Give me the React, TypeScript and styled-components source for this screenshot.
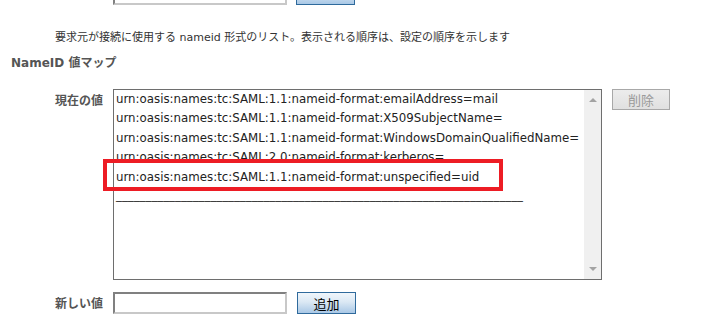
import { createGlobalStyle, styled } from 'styled-components';

const GlobalStyle = createGlobalStyle`
  body {
    margin: 0;
    background: #fff;
    font-family: "DejaVu Sans", "Noto Sans CJK JP", sans-serif;
  }
`;

// 設定ページ全体
const Page = styled.div`
  display: flex;
  flex-direction: column;
  width: 727px;
  height: 325px;
  overflow: hidden;
`;

// 上で切れている入力行
const TopRow = styled.div`
  display: flex;
  gap: 9px;
  margin-top: -17px;
  padding-left: 113px;
`;

const TextInput = styled.input`
  box-sizing: border-box;
  width: 174px;
  height: 22px;
  border: 2px solid;
  border-color: #808080 #c8c8c8 #c8c8c8 #808080;
  background: #fff;
`;

const Button = styled.button<{ $disabled?: boolean }>`
  box-sizing: border-box;
  width: ${(p) => (p.$disabled ? '58px' : '59px')};
  height: ${(p) => (p.$disabled ? '21px' : '22px')};
  padding: 0;
  border: 1px solid ${(p) => (p.$disabled ? '#a8a8a8' : '#2f6a9c')};
  background: ${(p) =>
    p.$disabled
      ? 'linear-gradient(#ececec, #e0e0e0)'
      : 'linear-gradient(#f0f6fb, #dbe8f4 45%, #a9c8e6)'};
  color: ${(p) => (p.$disabled ? '#9a9a9a' : '#000')};
  font-family: "Noto Sans CJK JP", sans-serif;
  font-size: 13px;
  line-height: 1;
`;

const Description = styled.div`
  margin-top: 25px;
  padding-left: 55px;
  color: #333;
  font-size: 11px;
  line-height: 16px;
`;

const Heading = styled.div`
  margin-top: 9px;
  padding-left: 11px;
  color: #555;
  font-weight: bold;
  font-size: 12px;
  line-height: 16px;
`;

// ラベル + 入力欄の行
const FieldRow = styled.div<{ $top: number }>`
  display: flex;
  align-items: flex-start;
  gap: 10px;
  margin-top: ${(p) => p.$top}px;
`;

const Label = styled.div<{ $h: number }>`
  width: 103px;
  text-align: right;
  color: #555;
  font-family: "Noto Sans CJK JP", sans-serif;
  font-weight: bold;
  font-size: 12px;
  line-height: ${(p) => p.$h}px;
`;

// 現在の値リスト
const ListBox = styled.div`
  position: relative;
  box-sizing: border-box;
  display: flex;
  width: 489px;
  height: 191px;
  border: 1px solid #6e6e6e;
  background: #fff;
`;

const Options = styled.div`
  flex: 1;
  min-width: 0;
  padding-left: 2px;
`;

const Option = styled.div`
  height: 19.4px;
  line-height: 19.4px;
  color: #222;
  font-size: 11.8px;
  white-space: nowrap;
`;

const Separator = styled(Option)`
  line-height: 17px;
  color: #333;
`;

const ScrollTrack = styled.div`
  display: flex;
  flex-direction: column;
  justify-content: space-between;
  align-items: center;
  width: 17px;
  padding: 8px 0 8px;
  box-sizing: border-box;
  background: #f0f0f0;
`;

const Arrow = styled.div<{ $down?: boolean }>`
  width: 0;
  height: 0;
  border-left: 4px solid transparent;
  border-right: 4px solid transparent;
  ${(p) =>
    p.$down ? 'border-top: 4px solid #a3a3a3;' : 'border-bottom: 4px solid #a3a3a3;'}
`;

// 赤い注釈枠
const Highlight = styled.div`
  position: absolute;
  left: -11px;
  top: 69px;
  box-sizing: border-box;
  width: 400px;
  height: 32px;
  border: 4px solid #ed1c24;
  pointer-events: none;
`;

const values = [
  'urn:oasis:names:tc:SAML:1.1:nameid-format:emailAddress=mail',
  'urn:oasis:names:tc:SAML:1.1:nameid-format:X509SubjectName=',
  'urn:oasis:names:tc:SAML:1.1:nameid-format:WindowsDomainQualifiedName=',
  'urn:oasis:names:tc:SAML:2.0:nameid-format:kerberos=',
  'urn:oasis:names:tc:SAML:1.1:nameid-format:unspecified=uid',
];

const App = () => {
  return (
    <Page>
      <GlobalStyle />
      <TopRow>
        <TextInput />
        <Button />
      </TopRow>
      <Description>
        要求元が接続に使用する nameid 形式のリスト。表示される順序は、設定の順序を示します
      </Description>
      <Heading>NameID 値マップ</Heading>

      <FieldRow $top={18}>
        <Label $h={21}>現在の値</Label>
        <ListBox>
          <Options>
            {values.map((v) => (
              <Option key={v}>{v}</Option>
            ))}
            <Separator>{'_'.repeat(69)}</Separator>
          </Options>
          <ScrollTrack>
            <Arrow />
            <Arrow $down />
          </ScrollTrack>
          <Highlight />
        </ListBox>
        <Button $disabled>削除</Button>
      </FieldRow>

      <FieldRow $top={12}>
        <Label $h={22}>新しい値</Label>
        <TextInput />
        <Button>追加</Button>
      </FieldRow>
    </Page>
  );
};

export default App;
